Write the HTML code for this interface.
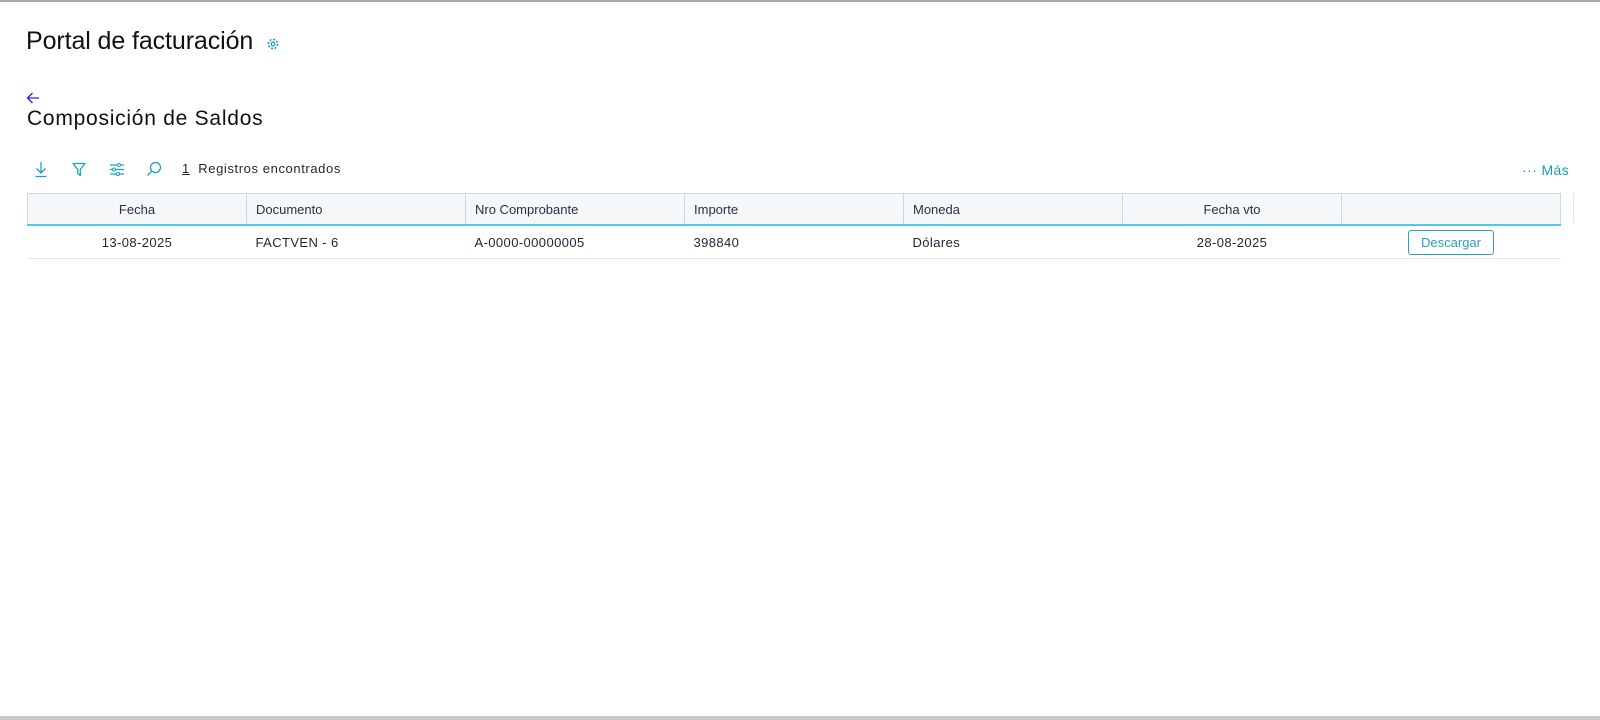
<!DOCTYPE html>
<html><head><meta charset="utf-8"><style>
body{margin:0;width:1600px;height:720px;background:#fff;font-family:"Liberation Sans",sans-serif;position:relative;overflow:hidden;color:#1d2433}
.top{position:absolute;left:0;top:0;width:1600px;height:2px;background:#a6a6ad}
.bot{position:absolute;left:0;top:716px;width:1600px;height:4px;background:#c8c6ca}
.abs{position:absolute;white-space:nowrap}
table{position:absolute;left:27px;top:193px;width:1534px;border-collapse:collapse;table-layout:fixed;font-size:13px}
th{background:#f5f7f9;height:30px;font-weight:normal;text-align:left;padding:0 9px;border-left:1px solid #c7dbe6;border-top:1px solid #c7dbe6;border-bottom:2px solid #4ec9ee;color:#2a3040}
th:last-child{border-right:1px solid #c7dbe6}
td{height:32px;padding:0 9px;border-bottom:1px solid #e3e6ea;color:#1d2433;letter-spacing:0.4px}
.c{text-align:center}
.btn{display:inline-block;border:1px solid #2aa3bd;border-radius:3px;color:#2a9fb7;padding:0;width:84px;height:23px;line-height:23px;text-align:center;font-size:13px;letter-spacing:0}
</style></head><body>
<div class="top"></div><div class="bot"></div>
<div class="abs" style="left:26px;top:27px;font-size:25px;color:#111;letter-spacing:-0.1px">Portal de facturación</div>
<svg class="abs" style="left:266px;top:37px" width="14" height="14" viewBox="0 0 14 14"><circle cx="7" cy="7" r="4.6" fill="none" stroke="#1aa2c4" stroke-width="1.6" stroke-dasharray="2 1.6"/><circle cx="7" cy="7" r="1.8" fill="none" stroke="#1aa2c4" stroke-width="1.3"/></svg>
<svg class="abs" style="left:26px;top:92px" width="14" height="12" viewBox="0 0 14 12"><path d="M13 6H1.5M6.5 1L1.5 6l5 5" fill="none" stroke="#2222ee" stroke-width="1.3"/></svg>
<div class="abs" style="left:27px;top:107px;font-size:21px;color:#111;letter-spacing:0.75px">Composición de Saldos</div>
<svg class="abs" style="left:34px;top:161px" width="14" height="17" viewBox="0 0 14 17"><path d="M7 1v11M2.5 7.5L7 12l4.5-4.5M1.5 15.5h11" fill="none" stroke="#1aa2c4" stroke-width="1.3"/></svg>
<svg class="abs" style="left:72px;top:162px" width="14" height="15" viewBox="0 0 14 15"><path d="M1 1.5h12L8.3 7.5v6L5.7 11.5v-4z" fill="none" stroke="#1aa2c4" stroke-width="1.3" stroke-linejoin="round"/></svg>
<svg class="abs" style="left:109px;top:162px" width="16" height="15" viewBox="0 0 16 15"><path d="M1 3h14M1 7.5h14M1 12h14" stroke="#1aa2c4" stroke-width="1.2"/><circle cx="10" cy="3" r="1.5" fill="#fff" stroke="#1aa2c4"/><circle cx="5" cy="7.5" r="1.5" fill="#fff" stroke="#1aa2c4"/><circle cx="9" cy="12" r="1.5" fill="#fff" stroke="#1aa2c4"/></svg>
<svg class="abs" style="left:146px;top:161px" width="16" height="16" viewBox="0 0 16 16"><circle cx="9.5" cy="6.5" r="5" fill="none" stroke="#1aa2c4" stroke-width="1.3"/><path d="M6 10L1.5 14.5" stroke="#1aa2c4" stroke-width="1.4"/></svg>
<div class="abs" style="left:182px;top:161px;font-size:13px;color:#1d2433;letter-spacing:0.6px"><span style="text-decoration:underline">1</span>&nbsp; Registros encontrados</div>
<div class="abs" style="left:1522px;top:162px;font-size:14px;color:#1a9cb8;letter-spacing:0.4px">··· Más</div>
<div class="abs" style="left:1573px;top:193px;width:1px;height:30px;background:#dfe6ec"></div>
<table>
<tr><th class="c">Fecha</th><th>Documento</th><th>Nro Comprobante</th><th>Importe</th><th>Moneda</th><th class="c">Fecha vto</th><th></th></tr>
<tr><td class="c">13-08-2025</td><td>FACTVEN - 6</td><td>A-0000-00000005</td><td>398840</td><td>Dólares</td><td class="c">28-08-2025</td><td class="c"><span class="btn">Descargar</span></td></tr>
</table>
</body></html>
